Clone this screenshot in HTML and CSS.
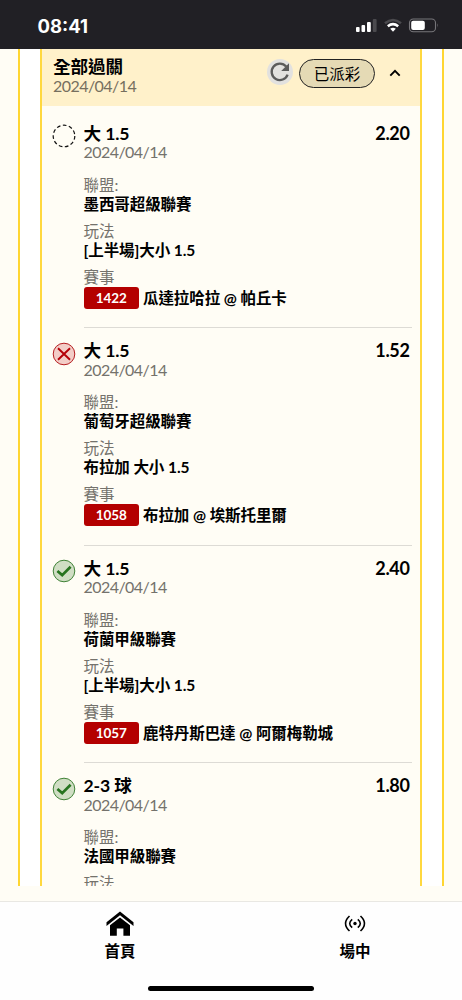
FILE: index.html
```html
<!DOCTYPE html>
<html lang="zh-Hant">
<head>
<meta charset="utf-8">
<title>全部過關</title>
<link rel="stylesheet" href="styles.css">
</head>
<body>
<div class="screen">
  <header class="status">
    <span class="clock">08:41</span>
    <svg class="status-icons" width="84" height="16" viewBox="0 0 84 16">
      <g fill="#fff"><rect x="0" y="9" width="3.6" height="5" rx="1"/><rect x="5.5" y="7" width="3.6" height="7" rx="1"/><rect x="11" y="4" width="3.8" height="10" rx="1"/></g>
      <rect x="16.8" y="1" width="3.8" height="13" rx="1" fill="#4b4a4e"/>
      <path d="M29 5.3Q37 -1.3 45 5.3" fill="none" stroke="#4b4a4e" stroke-width="2.6"/>
      <path d="M31.8 8.3Q37 4 42.2 8.3" fill="none" stroke="#fff" stroke-width="2.5"/>
      <path d="M34.2 10.8Q37 8.8 39.8 10.8L37 13.8Z" fill="#fff"/>
      <rect x="53.5" y="1" width="26" height="12.8" rx="3.8" fill="none" stroke="#77767a" stroke-width="1.1"/>
      <rect x="55.2" y="2.7" width="13.6" height="9.4" rx="2" fill="#fff"/>
      <path d="M81 5.2Q82.6 7.4 81 9.6Z" fill="#77767a"/>
    </svg>
  </header>
  <main class="content">
    <div class="outer">
      <section class="slip">
        <div class="slip-head">
          <div class="slip-name"><h1 class="title">全部過關</h1><div class="date">2024/04/14</div></div>
          <span class="refresh"><svg width="26" height="26" viewBox="0 0 26 26"><path d="M20.6 15.6A8.2 8.2 0 1 1 19.2 7.6" fill="none" stroke="#5b5b5b" stroke-width="2.3"/><path d="M22 4.2V12H14.2Z" fill="#5b5b5b"/></svg></span>
          <span class="pill">已派彩</span>
          <svg class="chevron" width="12" height="8" viewBox="0 0 12 8"><path d="M1.3 6.7L6 1.9L10.7 6.7" fill="none" stroke="#000" stroke-width="1.9"/></svg>
        </div>

        <article class="bet">
          <svg class="mark" width="24" height="24" viewBox="0 0 24 24"><circle cx="12" cy="12" r="10.8" fill="none" stroke="#111" stroke-width="1.2" stroke-dasharray="3.7 2.47"/></svg>
          <div class="detail">
            <div class="top"><h2 class="title">大 1.5</h2><span class="odds">2.20</span></div>
            <div class="date">2024/04/14</div>
            <dl class="facts">
              <div><dt>聯盟:</dt><dd>墨西哥超級聯賽</dd></div>
              <div><dt>玩法</dt><dd>[上半場]大小 1.5</dd></div>
              <div><dt>賽事</dt><dd class="match"><span class="code">1422</span>瓜達拉哈拉 @ 帕丘卡</dd></div>
            </dl>
          </div>
        </article>

        <article class="bet">
          <svg class="mark" width="24" height="24" viewBox="0 0 24 24"><circle cx="12" cy="12" r="10.8" fill="#f3cdc7" stroke="#b51d20" stroke-width="1"/><path d="M6 6.2L18 17.8M18 6.2L6 17.8" stroke="#b50008" stroke-width="1.9"/></svg>
          <div class="detail">
            <div class="top"><h2 class="title">大 1.5</h2><span class="odds">1.52</span></div>
            <div class="date">2024/04/14</div>
            <dl class="facts">
              <div><dt>聯盟:</dt><dd>葡萄牙超級聯賽</dd></div>
              <div><dt>玩法</dt><dd>布拉加 大小 1.5</dd></div>
              <div><dt>賽事</dt><dd class="match"><span class="code">1058</span>布拉加 @ 埃斯托里爾</dd></div>
            </dl>
          </div>
        </article>

        <article class="bet">
          <svg class="mark" width="24" height="24" viewBox="0 0 24 24"><circle cx="12" cy="12" r="10.8" fill="#d0dec4" stroke="#3f8236" stroke-width="1"/><path d="M5.4 11.9L10.2 16.1L18.6 7.8" fill="none" stroke="#27741f" stroke-width="2.7"/></svg>
          <div class="detail">
            <div class="top"><h2 class="title">大 1.5</h2><span class="odds">2.40</span></div>
            <div class="date">2024/04/14</div>
            <dl class="facts">
              <div><dt>聯盟:</dt><dd>荷蘭甲級聯賽</dd></div>
              <div><dt>玩法</dt><dd>[上半場]大小 1.5</dd></div>
              <div><dt>賽事</dt><dd class="match"><span class="code">1057</span>鹿特丹斯巴達 @ 阿爾梅勒城</dd></div>
            </dl>
          </div>
        </article>

        <article class="bet">
          <svg class="mark" width="24" height="24" viewBox="0 0 24 24"><circle cx="12" cy="12" r="10.8" fill="#d0dec4" stroke="#3f8236" stroke-width="1"/><path d="M5.4 11.9L10.2 16.1L18.6 7.8" fill="none" stroke="#27741f" stroke-width="2.7"/></svg>
          <div class="detail">
            <div class="top"><h2 class="title">2-3 球</h2><span class="odds">1.80</span></div>
            <div class="date">2024/04/14</div>
            <dl class="facts">
              <div><dt>聯盟:</dt><dd>法國甲級聯賽</dd></div>
              <div><dt>玩法</dt></div>
            </dl>
          </div>
        </article>
      </section>
    </div>
  </main>
  <nav class="tabs">
    <a class="tab"><svg width="28" height="26" viewBox="0 0 28 26"><path d="M0.5 11.2L14 0.4L27.5 11.2V15L14 4.3L0.5 15Z"/><path d="M4 14.3L14 6.4L24 14.3V24.8H17.4V17.6H10.8V24.8H4Z"/></svg>首頁</a>
    <a class="tab"><svg width="28" height="26" viewBox="0 0 28 26"><g fill="none" stroke="#000" stroke-width="1.6"><path d="M8.5 5Q0.6 12.5 8.5 20M19.5 5Q27.4 12.5 19.5 20M11.2 8.3Q6.2 12.5 11.2 16.7M16.8 8.3Q21.8 12.5 16.8 16.7"/></g><circle cx="14" cy="12.5" r="1.7"/></svg>場中</a>
  </nav>
  <div class="home-area"><div class="home-bar"></div></div>
</div>
</body>
</html>
```
FILE: styles.css
```css
* { box-sizing: border-box; }
body, h1, h2, dl, dd { margin: 0; }
body {
  font: 15.5px/19px Lato, "Noto Sans CJK TC", sans-serif;
  color: #000;
}
.screen {
  width: 462px;
  height: 1000px;
  display: flex;
  flex-direction: column;
  background: #fffdf5;
  overflow: hidden;
}
.status {
  flex: 0 0 49px;
  display: flex;
  align-items: center;
  justify-content: space-between;
  padding: 2px 22px 0 37.5px;
  background: #212025;
}
.clock {
  font: 700 18.5px/22px Inter, sans-serif;
  color: #fff;
}
.content {
  height: 837px;
  flex: none;
  padding: 0 18px;
  overflow: hidden;
}
.outer {
  padding: 0 20px;
  background: #fff;
  border: solid #ffd632;
  border-width: 0 2px;
}
.slip {
  height: 837px;
  border: solid #ffd83f;
  border-width: 0 2px;
  background: #fffdf5;
  overflow: hidden;
}
.slip-head {
  height: 57px;
  display: flex;
  align-items: flex-start;
  padding: 8px 19px 0 11px;
  background: #fff1ca;
}
.slip-name { flex: 1; }
.title {
  font-size: 17.6px;
  line-height: 19px;
  font-weight: 700;
  letter-spacing: -0.1px;
}
.date {
  margin-top: -0.5px;
  font-size: 16px;
  line-height: 19px;
  letter-spacing: -0.55px;
  color: #74726c;
}
.slip-head .date { color: #766f5e; }
.refresh {
  width: 26px;
  height: 26px;
  margin: 2px 6px 0 0;
  border-radius: 50%;
  background: #e2e1df;
}
.refresh svg { display: block; }
.pill {
  width: 76px;
  height: 29px;
  margin-top: 2px;
  border: 1.2px solid #222;
  border-radius: 15px;
  background: #e5dab5;
  text-align: center;
  line-height: 28px;
}
.chevron { margin: 12px 0 0 14px; }
.bet {
  display: flex;
  gap: 8px;
  padding: 13px 8px 0 10px;
}
.slip-head + .bet { padding-top: 17.6px; }
.mark { flex: none; margin: 0.5px 0 0 -0.5px; }
.detail {
  flex: 1;
  padding-bottom: 18.3px;
  border-bottom: 1px solid #dddbd5;
}
.top {
  display: flex;
  justify-content: space-between;
  padding-right: 2.5px;
}
.odds {
  font-size: 18px;
  font-weight: 700;
  letter-spacing: -0.35px;
}
.facts {
  display: flex;
  flex-direction: column;
  gap: 8px;
  margin-top: 14.7px;
}
dt { color: #74726c; }
dd { font-weight: 700; letter-spacing: -0.08px; }
.match {
  display: flex;
  gap: 4px;
  height: 22px;
  line-height: 22px;
}
.code {
  width: 55.5px;
  border-radius: 3px;
  background: #b40000;
  color: #fff;
  font-size: 13.5px;
  text-align: center;
}
.tabs {
  height: 70px;
  margin-top: 15px;
  flex: none;
  display: flex;
  gap: 21px;
  padding-left: 13px;
  border-top: 1px solid #e9e8e3;
  background: #fefefe;
}
.tab {
  flex: 1;
  display: flex;
  flex-direction: column;
  align-items: center;
  padding-top: 9px;
  gap: 5px;
  font-weight: 700;
}
.home-area {
  flex: 1;
  display: flex;
  justify-content: center;
  padding-top: 15px;
  background: #fefefe;
}
.home-bar {
  width: 166px;
  height: 5px;
  border-radius: 3px;
  background: #000;
}
```
